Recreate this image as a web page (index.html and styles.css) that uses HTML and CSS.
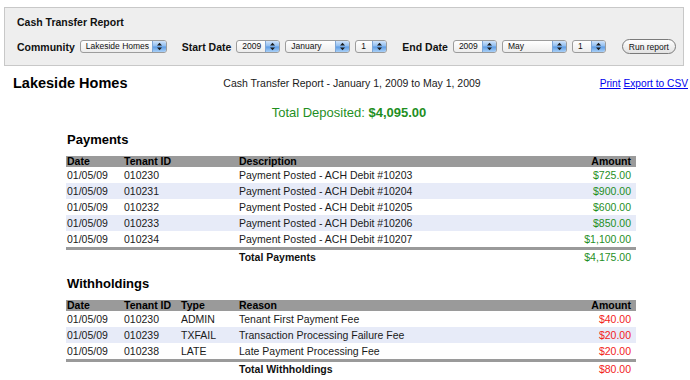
FILE: index.html
```html
<!DOCTYPE html>
<html lang="en">
<head>
    <meta charset="UTF-8">
    <title>Cash Transfer Report</title>
    <link rel="stylesheet" href="styles.css">
</head>
<body>
    <section class="filters">
        <h1 class="filters-title">Cash Transfer Report</h1>
        <div class="filter-row">
            <div class="filter-group">
                <span class="filter-label">Community</span>
                <span class="select select-wide"><span class="select-value">Lakeside Homes</span><span class="select-arrows"><svg width="7" height="9" viewBox="0 0 7 9"><path d="M3.5 0.8 L6 3.6 H1 Z M3.5 8.2 L6 5.4 H1 Z" fill="#1a1a1a"/></svg></span></span>
            </div>
            <div class="filter-group">
                <span class="filter-label">Start Date</span>
                <span class="select select-year"><span class="select-value">2009</span><span class="select-arrows"><svg width="7" height="9" viewBox="0 0 7 9"><path d="M3.5 0.8 L6 3.6 H1 Z M3.5 8.2 L6 5.4 H1 Z" fill="#1a1a1a"/></svg></span></span>
                <span class="select select-month"><span class="select-value">January</span><span class="select-arrows"><svg width="7" height="9" viewBox="0 0 7 9"><path d="M3.5 0.8 L6 3.6 H1 Z M3.5 8.2 L6 5.4 H1 Z" fill="#1a1a1a"/></svg></span></span>
                <span class="select select-day"><span class="select-value">1</span><span class="select-arrows"><svg width="7" height="9" viewBox="0 0 7 9"><path d="M3.5 0.8 L6 3.6 H1 Z M3.5 8.2 L6 5.4 H1 Z" fill="#1a1a1a"/></svg></span></span>
            </div>
            <div class="filter-group">
                <span class="filter-label">End Date</span>
                <span class="select select-year"><span class="select-value">2009</span><span class="select-arrows"><svg width="7" height="9" viewBox="0 0 7 9"><path d="M3.5 0.8 L6 3.6 H1 Z M3.5 8.2 L6 5.4 H1 Z" fill="#1a1a1a"/></svg></span></span>
                <span class="select select-month"><span class="select-value">May</span><span class="select-arrows"><svg width="7" height="9" viewBox="0 0 7 9"><path d="M3.5 0.8 L6 3.6 H1 Z M3.5 8.2 L6 5.4 H1 Z" fill="#1a1a1a"/></svg></span></span>
                <span class="select select-day select-day-end"><span class="select-value">1</span><span class="select-arrows"><svg width="7" height="9" viewBox="0 0 7 9"><path d="M3.5 0.8 L6 3.6 H1 Z M3.5 8.2 L6 5.4 H1 Z" fill="#1a1a1a"/></svg></span></span>
            </div>
            <button class="run-button">Run report</button>
        </div>
    </section>

    <header class="report-head">
        <h2 class="community-name">Lakeside Homes</h2>
        <p class="report-period">Cash Transfer Report - January 1, 2009 to May 1, 2009</p>
        <nav class="report-links">
            <a href="#">Print</a>
            <a href="#">Export to CSV</a>
        </nav>
    </header>

    <p class="total-deposited">Total Deposited: <strong>$4,095.00</strong></p>

    <section class="report-section">
        <h3>Payments</h3>
        <table class="report-table">
            <thead>
                <tr>
                    <th class="col-date">Date</th>
                    <th class="col-tenant-wide">Tenant ID</th>
                    <th>Description</th>
                    <th class="col-amount">Amount</th>
                </tr>
            </thead>
            <tbody>
                <tr><td>01/05/09</td><td>010230</td><td>Payment Posted - ACH Debit #10203</td><td class="amount credit">$725.00</td></tr>
                <tr><td>01/05/09</td><td>010231</td><td>Payment Posted - ACH Debit #10204</td><td class="amount credit">$900.00</td></tr>
                <tr><td>01/05/09</td><td>010232</td><td>Payment Posted - ACH Debit #10205</td><td class="amount credit">$600.00</td></tr>
                <tr><td>01/05/09</td><td>010233</td><td>Payment Posted - ACH Debit #10206</td><td class="amount credit">$850.00</td></tr>
                <tr><td>01/05/09</td><td>010234</td><td>Payment Posted - ACH Debit #10207</td><td class="amount credit">$1,100.00</td></tr>
            </tbody>
            <tfoot>
                <tr><td></td><td></td><td class="total-label">Total Payments</td><td class="amount credit">$4,175.00</td></tr>
            </tfoot>
        </table>
    </section>

    <section class="report-section">
        <h3>Withholdings</h3>
        <table class="report-table">
            <thead>
                <tr>
                    <th class="col-date">Date</th>
                    <th class="col-tenant">Tenant ID</th>
                    <th class="col-type">Type</th>
                    <th>Reason</th>
                    <th class="col-amount">Amount</th>
                </tr>
            </thead>
            <tbody>
                <tr><td>01/05/09</td><td>010230</td><td>ADMIN</td><td>Tenant First Payment Fee</td><td class="amount debit">$40.00</td></tr>
                <tr><td>01/05/09</td><td>010239</td><td>TXFAIL</td><td>Transaction Processing Failure Fee</td><td class="amount debit">$20.00</td></tr>
                <tr><td>01/05/09</td><td>010238</td><td>LATE</td><td>Late Payment Processing Fee</td><td class="amount debit">$20.00</td></tr>
            </tbody>
            <tfoot>
                <tr><td></td><td></td><td></td><td class="total-label">Total Withholdings</td><td class="amount debit">$80.00</td></tr>
            </tfoot>
        </table>
    </section>
</body>
</html>
```

FILE: styles.css
```css
body {
    margin: 0;
    padding: 7px 2px 0 4px;
    font-family: "Liberation Sans", Arial, sans-serif;
    font-size: 10.5px;
    color: #1a1a1a;
    background: #fff;
}

/* filter panel */
.filters {
    width: 680px;
    box-sizing: border-box;
    background-color: #eeeeee;
    border: 1px solid #c8c8c8;
    padding: 8px 12px 11px;
}
.filters-title {
    margin: 0 0 10px;
    font-size: 10.5px;
    line-height: 13px;
    font-weight: bold;
    color: #111;
}
.filter-row {
    display: flex;
    align-items: center;
    height: 15px;
    white-space: nowrap;
}
.filter-group {
    display: flex;
    align-items: center;
    flex-shrink: 0;
    margin-right: 15px;
}
.filter-label {
    font-weight: bold;
    font-size: 10.5px;
    margin-right: 5px;
    color: #111;
}
.select {
    display: flex;
    align-items: stretch;
    flex-shrink: 0;
    height: 13px;
    box-sizing: border-box;
    border: 1px solid #9c9c9c;
    border-radius: 3px;
    background: linear-gradient(#ffffff, #ececec);
    margin-right: 5px;
    overflow: hidden;
}
.select:last-child {
    margin-right: 0;
}
.select-value {
    flex: 1;
    padding-left: 5px;
    font-size: 8.5px;
    line-height: 11px;
    color: #111;
}
.select-arrows {
    width: 13px;
    display: flex;
    align-items: center;
    justify-content: center;
    border-left: 1px solid #7ea6d6;
    background: linear-gradient(#cfe3fa, #8dbcf0 48%, #5c9be4 52%, #a9d0f7);
}
.select-wide { width: 87px; }
.select-year { width: 44px; }
.select-month { width: 65px; }
.select-day { width: 32px; }
.select-day-end { width: 34px; }

.run-button {
    flex-shrink: 0;
    margin-left: 1px;
    width: 54px;
    height: 15px;
    padding: 0;
    border: 1px solid #7a7a7a;
    border-radius: 8px;
    background: linear-gradient(#ffffff, #e2e2e2);
    font-family: "Liberation Sans", Arial, sans-serif;
    font-size: 8.5px;
    color: #111;
}

/* report header */
.report-head {
    display: grid;
    grid-template-columns: 1fr auto 1fr;
    align-items: center;
    margin-top: 8px;
    padding-left: 9px;
    height: 18px;
}
.community-name {
    margin: 0;
    font-size: 14.5px;
    font-weight: bold;
    color: #000;
}
.report-period {
    margin: 0 0 0 3px;
    font-size: 10.5px;
}
.report-links {
    justify-self: end;
    font-size: 10.2px;
}
.report-links a {
    color: #0000ee;
}
.total-deposited {
    margin: 13px 0 0 6px;
    text-align: center;
    font-size: 13px;
    line-height: 16px;
    color: #1f8f1f;
}

/* tables */
.report-section {
    margin-left: 62px;
    width: 570px;
}
.report-section h3 {
    margin: 11px 0 8px 1px;
    font-size: 13px;
    line-height: 16px;
    color: #000;
}
.report-section + .report-section h3 {
    margin-top: 12px;
}
.report-table {
    width: 100%;
    border-collapse: collapse;
    table-layout: fixed;
}
.report-table th {
    background-color: #9a9a9a;
    color: #000;
    text-align: left;
    font-size: 10.5px;
    line-height: 11px;
    height: 11px;
    padding: 0 1px;
}
.report-table td {
    height: 16px;
    padding: 0 1px;
    line-height: 16px;
    white-space: nowrap;
}
.report-table tbody tr:nth-child(even) {
    background-color: #e7ebf8;
}
.report-table tfoot tr {
    border-top: 3px solid #9a9a9a;
}
.report-table tfoot td {
    line-height: 14px;
    height: 14px;
}
.col-date { width: 55px; }
.col-tenant { width: 55px; }
.col-tenant-wide { width: 113px; }
.col-type { width: 56px; }
.col-amount { width: 80px; }
.report-table .col-amount,
.report-table .amount {
    text-align: right;
    padding-right: 5px;
}
.total-label {
    font-weight: bold;
    color: #111;
}
.credit {
    color: #1f8f1f;
}
.debit {
    color: #f21c1c;
}
```
